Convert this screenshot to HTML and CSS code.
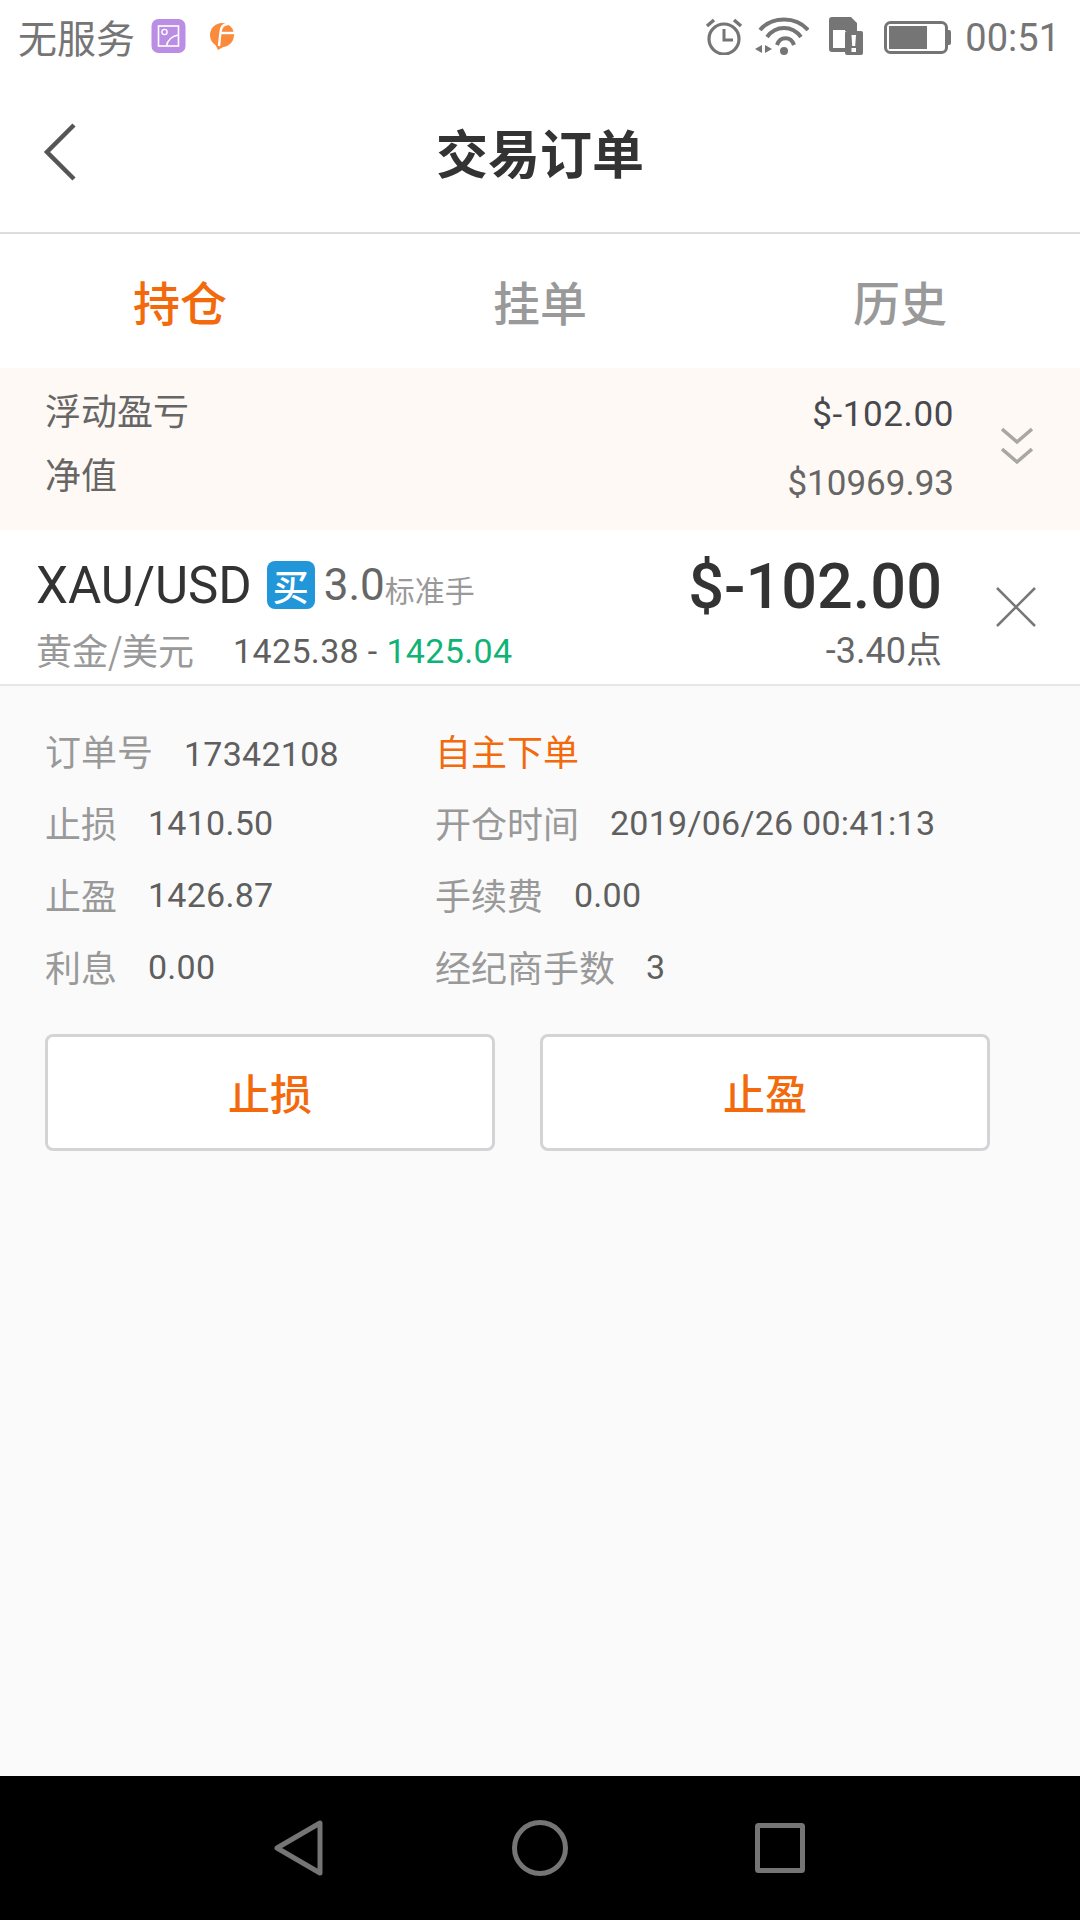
FILE: index.html
```html
<!DOCTYPE html>
<html lang="zh">
<head>
    <meta charset="utf-8">
    <title>交易订单</title>
    <link rel="stylesheet" href="styles.css">
</head>
<body>
    <div class="screen">
        <div class="status-bar">
            <span class="carrier">无服务</span>
            <svg class="icon-gallery" width="35" height="34" viewBox="0 0 34 34">
                <rect width="34" height="34" rx="7" fill="#bb8ee6"/>
                <rect x="7" y="7" width="20" height="20" fill="none" stroke="#fff" stroke-width="1.6"/>
                <circle cx="13" cy="13" r="2.6" fill="none" stroke="#fff" stroke-width="1.4"/>
                <path d="M15 27c1-6 6-10 12-11" fill="none" stroke="#fff" stroke-width="1.6"/>
            </svg>
            <svg class="icon-app" width="24" height="27" viewBox="0 0 24 27">
                <circle cx="12" cy="12" r="12" fill="#fb8b3c"/>
                <path d="M4 19l11 4-7 4z" fill="#fb8b3c"/>
                <path d="M18 1c-5 0-7 3-7.500 8L9 23" fill="none" stroke="#fff" stroke-width="2.400"/>
                <path d="M10 10h14" fill="none" stroke="#fff" stroke-width="2.400"/>
            </svg>
            <span class="status-spacer"></span>
            <svg class="icon-alarm" width="38" height="38" viewBox="0 0 38 38" fill="none" stroke="#757575">
                <circle cx="19" cy="22" r="15" stroke-width="3.200"/>
                <path d="M19 12v11h9" stroke-width="3"/>
                <path d="M2 9l7-6M36 9l-7-6" stroke-width="3.400"/>
            </svg>
            <svg class="icon-wifi" width="54" height="38" viewBox="0 0 54 38" fill="none" stroke="#757575" stroke-width="4">
                <path d="M5 13c12-14 36-14 48 0"/>
                <path d="M12 20c9-12 25-12 34 0"/>
                <path d="M22 28c3-9 14-9 17 0"/>
                <circle cx="29" cy="34" r="4" fill="#757575" stroke="none"/>
                <path d="M7 28l-7 4 7 4zM10 28l7 4-7 4z" fill="#757575" stroke="none"/>
            </svg>
            <svg class="icon-sim" width="34" height="38" viewBox="0 0 34 38">
                <path d="M3 0h19l6 6v8H16v21H3a3 3 0 0 1-3-3V3a3 3 0 0 1 3-3z" fill="#757575"/>
                <path d="M4 13h12v18H4z" fill="#fff"/>
                <rect x="16" y="14" width="18" height="24" rx="2" fill="#757575"/>
                <path d="M22.500 18h4.500l-.8 11h-3z" fill="#fff"/>
                <rect x="22.500" y="31" width="4.500" height="4" fill="#fff"/>
            </svg>
            <svg class="icon-battery" width="67" height="33" viewBox="0 0 67 33">
                <rect x="1.500" y="1.500" width="61" height="30" rx="5" fill="none" stroke="#757575" stroke-width="3"/>
                <rect x="5" y="5" width="38" height="23" fill="#757575"/>
                <path d="M64 9h1a2 2 0 0 1 2 2v11a2 2 0 0 1-2 2h-1z" fill="#757575"/>
            </svg>
            <span class="clock">00:51</span>
        </div>

        <header class="title-bar">
            <svg class="icon-back" width="36" height="60" viewBox="0 0 36 60" fill="none" stroke="#555" stroke-width="4.500">
                <path d="M32 3L5 30l27 27"/>
            </svg>
            <h1 class="page-title">交易订单</h1>
        </header>

        <nav class="tabs">
            <a class="tab tab-active">持仓</a>
            <a class="tab">挂单</a>
            <a class="tab">历史</a>
        </nav>

        <section class="summary">
            <div class="summary-labels">
                <span>浮动盈亏</span>
                <span>净值</span>
            </div>
            <div class="summary-values">
                <span class="summary-float">$-102.00</span>
                <span class="summary-equity">$10969.93</span>
            </div>
            <svg class="icon-expand" width="32" height="40" viewBox="0 0 32 40" fill="none" stroke="#a8a8a0" stroke-width="3.500">
                <path d="M1 3l15 13L31 3"/>
                <path d="M1 23l15 13 15-13"/>
            </svg>
        </section>

        <section class="order-row">
            <div class="order-main">
                <div class="order-line-top">
                    <span class="symbol">XAU/USD</span>
                    <span class="side-badge">买</span>
                    <span class="lots">3.0</span><span class="lots-unit">标准手</span>
                </div>
                <div class="order-line-bottom">
                    <span class="symbol-name">黄金/美元</span>
                    <span class="prices">1425.38 - <span class="price-now">1425.04</span></span>
                </div>
            </div>
            <div class="order-profit">
                <span class="profit-value">$-102.00</span>
                <span class="profit-points">-3.40点</span>
            </div>
            <svg class="icon-close" width="40" height="40" viewBox="0 0 40 40" fill="none" stroke="#777" stroke-width="2.500">
                <path d="M1 1l38 38M39 1L1 39"/>
            </svg>
        </section>

        <section class="details">
            <div class="detail-grid">
                <div class="detail"><span class="detail-label">订单号</span><span class="detail-value detail-id">17342108</span></div>
                <div class="detail"><span class="detail-flag">自主下单</span></div>
                <div class="detail"><span class="detail-label">止损</span><span class="detail-value">1410.50</span></div>
                <div class="detail"><span class="detail-label">开仓时间</span><span class="detail-value">2019/06/26 00:41:13</span></div>
                <div class="detail"><span class="detail-label">止盈</span><span class="detail-value">1426.87</span></div>
                <div class="detail"><span class="detail-label">手续费</span><span class="detail-value">0.00</span></div>
                <div class="detail"><span class="detail-label">利息</span><span class="detail-value">0.00</span></div>
                <div class="detail"><span class="detail-label">经纪商手数</span><span class="detail-value">3</span></div>
            </div>
            <div class="detail-actions">
                <button class="action-button">止损</button>
                <button class="action-button">止盈</button>
            </div>
        </section>

        <footer class="nav-bar">
            <svg width="52" height="58" viewBox="0 0 52 58" fill="none" stroke="#757575" stroke-width="5" stroke-linejoin="round">
                <path d="M47 4v50L4 29z"/>
            </svg>
            <svg width="56" height="56" viewBox="0 0 56 56" fill="none" stroke="#757575" stroke-width="5">
                <circle cx="28" cy="28" r="25.500"/>
            </svg>
            <svg width="50" height="50" viewBox="0 0 50 50" fill="none" stroke="#757575" stroke-width="5" stroke-linejoin="round">
                <rect x="2.500" y="2.500" width="45" height="45" rx="1"/>
            </svg>
        </footer>
    </div>
</body>
</html>
```

FILE: styles.css
```css
* {
    box-sizing: border-box;
}

html, body {
    margin: 0;
    padding: 0;
}

body {
    font-family: "Noto Sans CJK SC", Roboto, sans-serif;
    background-color: #fff;
}

.screen {
    width: 1080px;
    height: 1920px;
    display: flex;
    flex-direction: column;
    overflow: hidden;
}

.status-bar {
    height: 72px;
    flex: none;
    display: flex;
    align-items: center;
    padding: 0 20px 0 18px;
    color: #757575;
}

.carrier {
    font-size: 39px;
    line-height: 72px;
}

.icon-gallery {
    margin-left: 16px;
}

.icon-app {
    margin-left: 24px;
}

.status-spacer {
    flex: 1;
}

.icon-wifi {
    margin-left: 12px;
}

.icon-sim {
    margin-left: 20px;
}

.icon-battery {
    margin-left: 21px;
    margin-top: 2px;
}

.clock {
    margin-left: 14px;
    margin-top: 4px;
    font-family: Roboto, sans-serif;
    font-size: 38px;
}

.title-bar {
    height: 162px;
    flex: none;
    display: flex;
    align-items: center;
    justify-content: center;
    position: relative;
    border-bottom: 2px solid #ddd;
}

.icon-back {
    position: absolute;
    left: 42px;
    top: 50px;
}

.page-title {
    margin: 0 0 2px;
    font-size: 52px;
    font-weight: bold;
    color: #333;
}

.tabs {
    height: 134px;
    flex: none;
    display: flex;
}

.tab {
    flex: 1;
    display: flex;
    align-items: center;
    justify-content: center;
    padding-bottom: 2px;
    font-size: 47px;
    font-weight: 500;
    color: #999;
}

.tab-active {
    color: #f26a0c;
}

.summary {
    height: 162px;
    flex: none;
    display: flex;
    align-items: center;
    padding: 0 47px 0 45px;
    background-color: #fef9f4;
    color: #666;
}

.summary-labels {
    flex: 1;
    display: flex;
    flex-direction: column;
    gap: 22px;
    padding-bottom: 16px;
    font-size: 36px;
    line-height: 42px;
}

.summary-values {
    display: flex;
    flex-direction: column;
    align-items: flex-end;
    gap: 27px;
    margin-right: 47px;
    font-family: Roboto, sans-serif;
    font-size: 35px;
    line-height: 42px;
}

.summary-float {
    color: #48484f;
    letter-spacing: 0.6px;
}

.icon-expand {
    margin-bottom: 6px;
}

.order-row {
    height: 156px;
    flex: none;
    display: flex;
    align-items: center;
    padding: 0 44px 0 36px;
    border-bottom: 2px solid #e6e6e6;
}

.order-main {
    flex: 1;
    padding-top: 8px;
}

.order-line-top {
    display: flex;
    align-items: center;
    height: 76px;
}

.symbol {
    font-family: Roboto, sans-serif;
    font-size: 51px;
    color: #333;
}

.side-badge {
    width: 48px;
    height: 48px;
    margin: 0 9px 0 15px;
    display: flex;
    align-items: center;
    justify-content: center;
    background-color: #2196d8;
    border-radius: 8px;
    color: #fff;
    font-size: 36px;
    font-weight: 500;
}

.lots {
    font-family: Roboto, sans-serif;
    font-size: 44px;
    color: #666;
}

.lots-unit {
    font-size: 30px;
    color: #999;
    margin-top: 8px;
}

.order-line-bottom {
    display: flex;
    align-items: center;
    height: 52px;
}

.symbol-name {
    font-size: 36px;
    color: #999;
    width: 197px;
}

.prices {
    margin-top: 3px;
    font-family: Roboto, sans-serif;
    font-size: 34px;
    letter-spacing: 0.35px;
    color: #5f5f5f;
}

.price-now {
    color: #0fb375;
}

.order-profit {
    display: flex;
    flex-direction: column;
    align-items: flex-end;
    margin-right: 54px;
    padding-top: 12px;
}

.profit-value {
    font-family: Roboto, sans-serif;
    font-size: 63px;
    font-weight: 500;
    line-height: 76px;
    color: #333;
}

.profit-points {
    font-family: Roboto, "Noto Sans CJK SC", sans-serif;
    font-size: 36px;
    line-height: 52px;
    color: #666;
}

.details {
    flex: 1;
    padding: 28px 45px 0;
    background-color: #fafafa;
}

.detail-grid {
    display: grid;
    grid-template-columns: 390px 1fr;
    grid-auto-rows: 72px;
}

.detail {
    display: flex;
    align-items: center;
    gap: 31px;
    font-size: 36px;
}

.detail-label {
    color: #999;
}

.detail-value {
    margin-top: 2px;
    font-family: Roboto, sans-serif;
    font-size: 34px;
    letter-spacing: 0.25px;
    color: #5f5f5f;
}

.detail-id {
    margin-top: 8px;
}

.detail-flag {
    color: #f26a0c;
}

.detail-actions {
    display: flex;
    gap: 45px;
    margin-top: 32px;
}

.action-button {
    width: 450px;
    height: 117px;
    padding-bottom: 4px;
    background-color: #fff;
    border: 3px solid #d2d4d6;
    border-radius: 8px;
    color: #f26a0c;
    font-family: inherit;
    font-size: 42px;
    font-weight: 500;
}

.nav-bar {
    height: 144px;
    flex: none;
    display: flex;
    align-items: center;
    justify-content: center;
    gap: 187px;
    padding-right: 2px;
    background-color: #000;
}
```
